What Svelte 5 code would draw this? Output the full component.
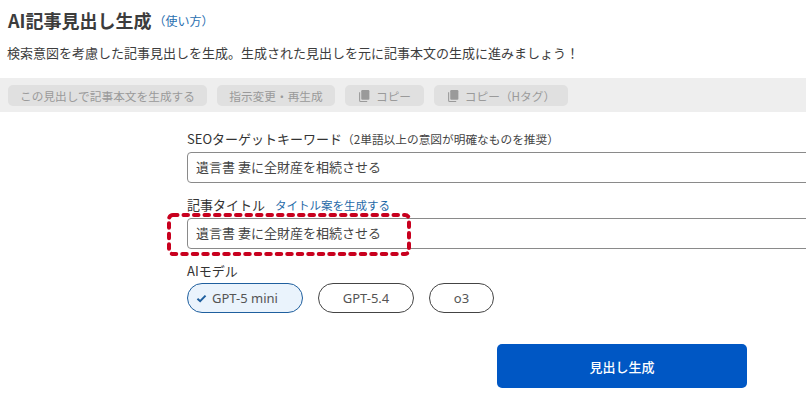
<script>
  let keyword = '遺言書 妻に全財産を相続させる';
  let title = '遺言書 妻に全財産を相続させる';
  let models = ['GPT-5 mini', 'GPT-5.4', 'o3'];
  let model = 'GPT-5 mini';
</script>

<div class="page">
  <header class="head">
    <h1>AI記事見出し生成</h1>
    <a href="#usage" class="usage">（使い方）</a>
  </header>
  <p class="desc">検索意図を考慮した記事見出しを生成。生成された見出しを元に記事本文の生成に進みましょう！</p>

  <div class="toolbar">
    <button class="tool" disabled>この見出しで記事本文を生成する</button>
    <button class="tool tool--mid" disabled>指示変更・再生成</button>
    <button class="tool tool--copy" disabled>
      <svg viewBox="0 0 12 12" width="13" height="13" aria-hidden="true">
        <path d="M4 1h5.5a1 1 0 0 1 1 1v7a1 1 0 0 1-1 1H4a1 1 0 0 1-1-1V2a1 1 0 0 1 1-1z" fill="#9a9a9a"/>
        <path d="M1.5 3v7.5a1 1 0 0 0 1 1h6" fill="none" stroke="#9a9a9a" stroke-width="1"/>
      </svg>
      コピー
    </button>
    <button class="tool tool--copy2" disabled>
      <svg viewBox="0 0 12 12" width="13" height="13" aria-hidden="true">
        <path d="M4 1h5.5a1 1 0 0 1 1 1v7a1 1 0 0 1-1 1H4a1 1 0 0 1-1-1V2a1 1 0 0 1 1-1z" fill="#9a9a9a"/>
        <path d="M1.5 3v7.5a1 1 0 0 0 1 1h6" fill="none" stroke="#9a9a9a" stroke-width="1"/>
      </svg>
      コピー（Hタグ）
    </button>
  </div>

  <form class="form" on:submit|preventDefault>
    <div class="field">
      <label for="kw">SEOターゲットキーワード<span class="hint">（2単語以上の意図が明確なものを推奨）</span></label>
      <input id="kw" bind:value={keyword} />
    </div>

    <div class="field field--title">
      <label for="ttl">記事タイトル<a href="#gen" class="gen">タイトル案を生成する</a></label>
      <input id="ttl" bind:value={title} />
      <svg class="mark" width="244" height="43" aria-hidden="true">
        <rect x="2" y="2" width="240" height="39" rx="4" fill="none" stroke="#c8001e" stroke-width="4" stroke-linecap="round" stroke-dasharray="4.5 6"/>
      </svg>
    </div>

    <div class="field field--model">
      <span class="label">AIモデル</span>
      <div class="chips">
        {#each models as m}
          <button
            type="button"
            class="chip"
            class:chip--active={model === m}
            on:click={() => (model = m)}
          >
            {#if model === m}
              <svg viewBox="0 0 12 10" width="11" height="9" aria-hidden="true">
                <path d="M1.5 5.2 4.5 8l6-6.2" fill="none" stroke="#1f5f9e" stroke-width="2.2"/>
              </svg>
            {/if}
            {m}
          </button>
        {/each}
      </div>
    </div>

    <div class="submit-row">
      <button type="submit" class="submit">見出し生成</button>
    </div>
  </form>
</div>

<style>
  :global(body) {
    margin: 0;
    background: #fff;
  }

  .page {
    width: 806px;
    height: 413px;
    overflow: hidden;
    font-family: "Noto Sans CJK JP", "Noto Sans", sans-serif;
    color: #333;
  }

  .head {
    display: flex;
    align-items: center;
    height: 22px;
    margin: 9px 0 0 8px;
  }

  h1 {
    margin: 0;
    font-size: 18px;
    font-weight: 700;
    line-height: 22px;
    color: #3c3c3c;
  }

  .usage {
    margin-left: 2px;
    font-size: 12px;
    color: #2a6fb0;
    text-decoration: none;
  }

  .desc {
    margin: 12px 0 0 7px;
    font-size: 13px;
    line-height: 20px;
    color: #3d3d3d;
  }

  .toolbar {
    display: flex;
    align-items: center;
    gap: 10px;
    height: 34px;
    margin-top: 15px;
    padding-left: 8px;
    background: #eeeeee;
  }

  .tool {
    display: flex;
    align-items: center;
    justify-content: center;
    gap: 5px;
    height: 21px;
    padding: 0;
    border: 0;
    border-radius: 5px;
    background: #e0e0e0;
    color: #9a9a9a;
    font-family: inherit;
    font-size: 11.7px;
    width: 199px;
  }

  .tool--mid {
    width: 118px;
  }

  .tool--copy {
    width: 79px;
  }

  .tool--copy2 {
    width: 134px;
  }

  .form {
    display: flex;
    flex-direction: column;
    width: 640px;
    margin: 17px 0 0 187px;
  }

  .field {
    position: relative;
  }

  .field label,
  .label {
    display: block;
    font-size: 13px;
    line-height: 20px;
    color: #333;
  }

  .hint {
    font-size: 11.7px;
    color: #444;
  }

  .gen {
    margin-left: 10px;
    font-size: 11.5px;
    color: #1f6aa8;
    text-decoration: none;
  }

  input {
    display: block;
    box-sizing: border-box;
    width: 100%;
    height: 31px;
    margin-top: 3px;
    padding: 0 8px 2px;
    border: 1px solid #8a8a8a;
    border-radius: 4px;
    background: #fff;
    color: #444;
    font-family: inherit;
    font-size: 13px;
    outline: none;
  }

  .field--title {
    margin-top: 12px;
  }

  .mark {
    position: absolute;
    left: -20px;
    top: 18px;
    pointer-events: none;
  }

  .field--model {
    margin-top: 12px;
  }

  .chips {
    display: flex;
    gap: 15px;
    margin-top: 2px;
  }

  .chip {
    display: flex;
    align-items: center;
    justify-content: center;
    gap: 5px;
    box-sizing: border-box;
    height: 30px;
    padding: 0;
    border: 1px solid #444;
    border-radius: 15px;
    background: #fff;
    color: #555;
    font-family: "Noto Sans", sans-serif;
    font-size: 13px;
    width: 96px;
  }

  .chip:last-child {
    width: 65px;
  }

  .chip--active {
    width: 116px;
    justify-content: flex-start;
    padding-left: 8px;
    border-color: #1f5f9e;
    background: #eaf3fc;
  }

  .submit-row {
    margin: 31px 0 0 310px;
  }

  .submit {
    display: block;
    width: 250px;
    height: 44px;
    border: 0;
    border-radius: 5px;
    background: #0057c4;
    color: #fff;
    font-family: inherit;
    font-size: 13px;
    font-weight: 500;
  }
</style>
